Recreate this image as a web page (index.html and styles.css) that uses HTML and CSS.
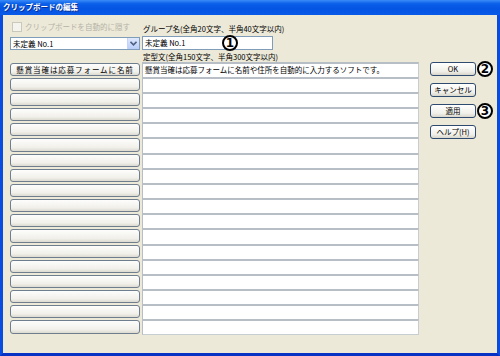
FILE: index.html
```html
<!DOCTYPE html>
<html lang="ja">
<head>
    <meta charset="UTF-8">
    <title>クリップボードの編集</title>
    <link rel="stylesheet" href="styles.css">
</head>
<body>
    <div class="window">
        <div class="titlebar">クリップボードの編集</div>

        <div class="body">
            <div class="top">
                <div class="left-top">
                    <div class="check"><span class="box"></span>クリップボードを自動的に隠す</div>
                    <div class="combo">
                        <span class="combo-text">未定義 No.1</span>
                        <span class="combo-arrow">
                            <svg width="7" height="5" viewBox="0 0 7 5"><path d="M0.5 0.8 L3.5 3.8 L6.5 0.8" fill="none" stroke="#4d6185" stroke-width="1.6"/></svg>
                        </span>
                    </div>
                </div>
                <div class="mid-top">
                    <div class="label">グループ名(全角20文字、半角40文字以内)</div>
                    <div class="group-input">未定義 No.1<span class="mark mark-1">1</span></div>
                    <div class="label label-2">定型文(全角150文字、半角300文字以内)</div>
                </div>
            </div>

            <div class="editor">
                <div class="rows" id="rows"></div>

                <div class="side">
                    <div class="side-btn">OK<span class="mark mark-side">2</span></div>
                    <div class="side-btn">キャンセル</div>
                    <div class="side-btn">適用<span class="mark mark-side">3</span></div>
                    <div class="side-btn">ヘルプ(H)</div>
                </div>
            </div>
        </div>
    </div>

    <script>
        const entries = [
            { name: "懸賞当確は応募フォームに名前", text: "懸賞当確は応募フォームに名前や住所を自動的に入力するソフトです。" }
        ];

        const rows = document.getElementById("rows");
        for (let i = 0; i < 18; i++) {
            const entry = entries[i] || { name: "", text: "" };
            const btn = document.createElement("div");
            btn.className = "row-btn";
            btn.textContent = entry.name;
            const field = document.createElement("div");
            field.className = "row-field";
            field.textContent = entry.text;
            rows.appendChild(btn);
            rows.appendChild(field);
        }
    </script>
</body>
</html>
```

FILE: styles.css
```css
body {
    margin: 0;
    padding: 0;
    font-family: "Noto Sans CJK JP", "Liberation Sans", sans-serif;
    font-size: 7.5px;
    color: #000;
}

.window {
    width: 500px;
    height: 356px;
    display: flex;
    flex-direction: column;
}

.titlebar {
    height: 15px;
    line-height: 14px;
    padding-left: 3px;
    background: linear-gradient(#3a8cf8 0%, #0a5fe9 25%, #0554e3 60%, #0a5ae8 100%);
    color: white;
    font-weight: bold;
    font-size: 7.5px;
    text-shadow: 1px 1px 0 #0a2f95;
    flex-shrink: 0;
}

.body {
    flex: 1;
    background: #ece9d8;
    border-left: 3px solid #0a4be0;
    border-right: 3px solid #0a4be0;
    border-bottom: 3px solid #0832c4;
    padding-left: 7px;
}

.top {
    display: flex;
    height: 47px;
}

.left-top {
    width: 130px;
    padding-top: 7px;
}

.check {
    height: 10px;
    line-height: 10px;
    display: flex;
    align-items: center;
    color: #b4b2a6;
    margin-left: 2px;
    margin-bottom: 5px;
}

.box {
    width: 8px;
    height: 8px;
    border: 1px solid #cac8bb;
    background: #f4f3ee;
    margin-right: 3px;
}

.combo {
    height: 13px;
    box-sizing: border-box;
    border: 1px solid #7f9db9;
    background: white;
    display: flex;
    align-items: center;
}

.combo-text {
    flex: 1;
    padding-left: 2px;
    line-height: 11px;
}

.combo-arrow {
    width: 11px;
    height: 11px;
    background: linear-gradient(#dfe9fd, #b9cdf8);
    border-left: 1px solid #c3d3fd;
    display: flex;
    align-items: center;
    justify-content: center;
}

.mid-top {
    width: 277px;
    margin-left: 2px;
    padding-top: 9px;
}

.label {
    height: 10px;
    line-height: 10px;
    margin-left: 1px;
}

.group-input {
    position: relative;
    width: 131px;
    height: 14px;
    box-sizing: border-box;
    margin-top: 2px;
    border: 1px solid #7f9db9;
    background: white;
    line-height: 12px;
    padding-left: 2px;
}

.label-2 {
    margin-top: 1px;
    height: 11px;
    line-height: 11px;
}

.mark {
    position: absolute;
    width: 16px;
    height: 16px;
    box-sizing: border-box;
    border: 2px solid #000;
    border-radius: 50%;
    background: white;
    font-family: "DejaVu Sans", sans-serif;
    font-weight: bold;
    font-size: 12px;
    line-height: 12px;
    text-align: center;
    letter-spacing: 0;
}

.mark-1 {
    left: 79px;
    top: -2px;
}

.mark-side {
    left: 46px;
    top: -2px;
}

.editor {
    display: flex;
}

.rows {
    display: grid;
    grid-template-columns: 130px 277px;
    grid-template-rows: repeat(5, 15px) 16px repeat(5, 15px) 16px repeat(5, 15px) 16px;
    column-gap: 2px;
}

.row-btn {
    margin: 1px 0;
    box-sizing: border-box;
    border: 1px solid #6e7e8e;
    border-radius: 3px;
    background: linear-gradient(#fdfdfc, #f1f0ea 70%, #dcdad0);
    text-align: center;
    line-height: 11px;
    letter-spacing: 0.9px;
    overflow: hidden;
    white-space: nowrap;
}

.row-field {
    box-sizing: border-box;
    background: white;
    border-top: 2px solid #b7bec6;
    border-left: 1px solid #b7bec6;
    border-right: 1px solid #c8cdd2;
    line-height: 12px;
    padding-left: 2px;
    white-space: nowrap;
    overflow: hidden;
}

.row-field:last-child {
    border-bottom: 1px solid #c8cdd2;
}

.side {
    margin-left: 11px;
    display: flex;
    flex-direction: column;
    gap: 7px;
}

.side-btn {
    position: relative;
    width: 46px;
    height: 14px;
    box-sizing: border-box;
    border: 1px solid #2e4a6e;
    border-radius: 3px;
    background: linear-gradient(#ffffff, #f0efe8 70%, #d8d6cc);
    text-align: center;
    line-height: 12px;
}
```
